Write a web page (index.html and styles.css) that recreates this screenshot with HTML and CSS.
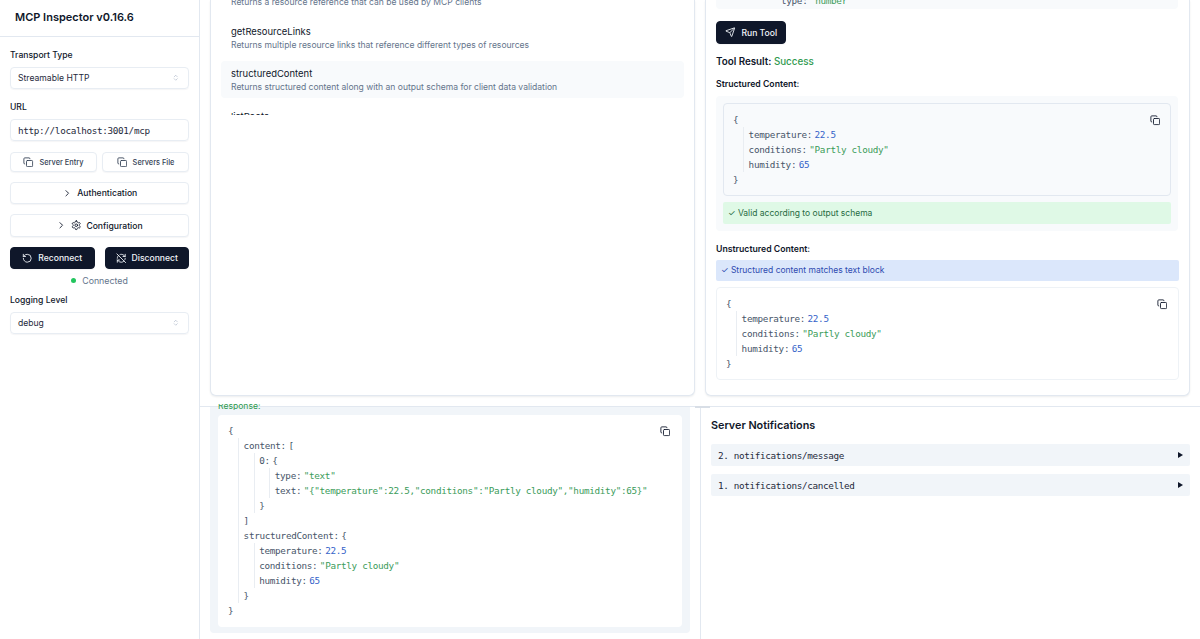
FILE: index.html
```html
<!DOCTYPE html>
<html lang="en">
<head>
<meta charset="utf-8">
<title>MCP Inspector</title>
<link rel="stylesheet" href="styles.css">
</head>
<body>
<svg class="defs" width="0" height="0" aria-hidden="true">
  <symbol id="i-copy" viewBox="0 0 24 24"><rect x="8" y="8" width="14" height="14" rx="2"/><path d="M4 16c-1.1 0-2-.9-2-2V4c0-1.1.9-2 2-2h10c1.1 0 2 .9 2 2"/></symbol>
  <symbol id="i-chev" viewBox="0 0 24 24"><path d="m9 18 6-6-6-6"/></symbol>
  <symbol id="i-updown" viewBox="0 0 24 24"><path d="m7 15 5 5 5-5"/><path d="m7 9 5-5 5 5"/></symbol>
  <symbol id="i-gear" viewBox="0 0 24 24"><path d="M12.22 2h-.44a2 2 0 0 0-2 2v.18a2 2 0 0 1-1 1.73l-.43.25a2 2 0 0 1-2 0l-.15-.08a2 2 0 0 0-2.73.73l-.22.38a2 2 0 0 0 .73 2.73l.15.1a2 2 0 0 1 1 1.72v.51a2 2 0 0 1-1 1.74l-.15.09a2 2 0 0 0-.73 2.73l.22.38a2 2 0 0 0 2.73.73l.15-.08a2 2 0 0 1 2 0l.43.25a2 2 0 0 1 1 1.73V20a2 2 0 0 0 2 2h.44a2 2 0 0 0 2-2v-.18a2 2 0 0 1 1-1.73l.43-.25a2 2 0 0 1 2 0l.15.08a2 2 0 0 0 2.73-.73l.22-.39a2 2 0 0 0-.73-2.73l-.15-.08a2 2 0 0 1-1-1.74v-.5a2 2 0 0 1 1-1.74l.15-.09a2 2 0 0 0 .73-2.73l-.22-.38a2 2 0 0 0-2.73-.73l-.15.08a2 2 0 0 1-2 0l-.43-.25a2 2 0 0 1-1-1.73V4a2 2 0 0 0-2-2z"/><circle cx="12" cy="12" r="3"/></symbol>
  <symbol id="i-rotate" viewBox="0 0 24 24"><path d="M3 12a9 9 0 1 0 9-9 9.75 9.75 0 0 0-6.74 2.74L3 8"/><path d="M3 3v5h5"/></symbol>
  <symbol id="i-off" viewBox="0 0 24 24"><path d="M21 8L18.74 5.74A9.75 9.75 0 0 0 12 3C11 3 10.03 3.16 9.13 3.47"/><path d="M8 16H3v5"/><path d="M3 12C3 9.51 4 7.26 5.64 5.64"/><path d="m3 16 2.26 2.26A9.75 9.75 0 0 0 12 21c2.49 0 4.74-1 6.36-2.64"/><path d="M21 12c0 1-.16 1.97-.47 2.87"/><path d="M21 3v5h-5"/><path d="M22 22 2 2"/></symbol>
  <symbol id="i-send" viewBox="0 0 24 24"><path d="M14.536 21.686a.5.5 0 0 0 .937-.024l6.5-19a.496.496 0 0 0-.635-.635l-19 6.5a.5.5 0 0 0-.024.937l7.93 3.18a2 2 0 0 1 1.112 1.11z"/><path d="m21.854 2.147-10.94 10.939"/></symbol>
</svg>
<div class="app">
  <aside class="sidebar">
    <header class="brand">MCP Inspector v0.16.6</header>
    <div class="controls">
      <label class="label">Transport Type</label>
      <div class="field select">Streamable HTTP<svg class="ico updown"><use href="#i-updown"/></svg></div>
      <label class="label url-label">URL</label>
      <div class="field mono">http://localhost:3001/mcp</div>
      <div class="pair small-pair">
        <button class="btn small"><svg class="ico"><use href="#i-copy"/></svg>Server Entry</button>
        <button class="btn small"><svg class="ico"><use href="#i-copy"/></svg>Servers File</button>
      </div>
      <button class="btn wide auth"><svg class="ico"><use href="#i-chev"/></svg>Authentication</button>
      <button class="btn wide cfg"><svg class="ico"><use href="#i-chev"/></svg><svg class="ico"><use href="#i-gear"/></svg>Configuration</button>
      <div class="pair dark-pair">
        <button class="btn dark"><svg class="ico"><use href="#i-rotate"/></svg>Reconnect</button>
        <button class="btn dark"><svg class="ico"><use href="#i-off"/></svg>Disconnect</button>
      </div>
      <div class="status"><span class="dot"></span>Connected</div>
      <label class="label log-label">Logging Level</label>
      <div class="field select">debug<svg class="ico updown"><use href="#i-updown"/></svg></div>
    </div>
  </aside>
  <main class="main">
    <section class="top">
      <div class="card">
        <div class="tools">
          <div class="tool"><div class="tool-name">getResourceReference</div><div class="tool-desc">Returns a resource reference that can be used by MCP clients</div></div>
          <div class="tool"><div class="tool-name">getResourceLinks</div><div class="tool-desc">Returns multiple resource links that reference different types of resources</div></div>
          <div class="tool selected"><div class="tool-name">structuredContent</div><div class="tool-desc">Returns structured content along with an output schema for client data validation</div></div>
          <div class="tool"><div class="tool-name">listRoots</div><div class="tool-desc">Lists the current MCP roots provided by the client</div></div>
        </div>
      </div>
      <div class="card result">
        <div class="schema-tail"><div class="json-line tail-line"><span class="key tail-key">type:</span><span class="str">"number"</span></div></div>
        <button class="btn dark run"><svg class="ico"><use href="#i-send"/></svg>Run Tool</button>
        <h4 class="result-title">Tool Result: <span class="ok">Success</span></h4>
        <h5 class="sub">Structured Content:</h5>
        <div class="struct-panel">
          <div class="json-box gray">
            <svg class="ico copy"><use href="#i-copy"/></svg>
            <div class="json-line">{</div>
            <div class="nest">
              <div class="json-line"><span class="key">temperature:</span><span class="num">22.5</span></div>
              <div class="json-line"><span class="key">conditions:</span><span class="str">"Partly cloudy"</span></div>
              <div class="json-line"><span class="key">humidity:</span><span class="num">65</span></div>
            </div>
            <div class="json-line">}</div>
          </div>
          <div class="valid">✓ Valid according to output schema</div>
        </div>
        <h5 class="sub unstructured">Unstructured Content:</h5>
        <div class="match">✓ Structured content matches text block</div>
        <div class="json-box plain">
          <svg class="ico copy"><use href="#i-copy"/></svg>
          <div class="json-line">{</div>
          <div class="nest">
            <div class="json-line"><span class="key">temperature:</span><span class="num">22.5</span></div>
            <div class="json-line"><span class="key">conditions:</span><span class="str">"Partly cloudy"</span></div>
            <div class="json-line"><span class="key">humidity:</span><span class="num">65</span></div>
          </div>
          <div class="json-line">}</div>
        </div>
      </div>
    </section>
    <section class="bottom">
      <div class="history">
        <div class="response-panel">
          <div class="response-clip"><span class="response-label">Response:</span></div>
          <div class="json-box response">
            <svg class="ico copy"><use href="#i-copy"/></svg>
            <div class="json-line">{</div>
            <div class="nest">
              <div class="json-line"><span class="key">content:</span>[</div>
              <div class="nest">
                <div class="json-line"><span class="key">0:</span>{</div>
                <div class="nest">
                  <div class="json-line"><span class="key">type:</span><span class="str">"text"</span></div>
                  <div class="json-line"><span class="key">text:</span><span class="str">"{"temperature":22.5,"conditions":"Partly cloudy","humidity":65}"</span></div>
                </div>
                <div class="json-line">}</div>
              </div>
              <div class="json-line">]</div>
              <div class="json-line"><span class="key">structuredContent:</span>{</div>
              <div class="nest">
                <div class="json-line"><span class="key">temperature:</span><span class="num">22.5</span></div>
                <div class="json-line"><span class="key">conditions:</span><span class="str">"Partly cloudy"</span></div>
                <div class="json-line"><span class="key">humidity:</span><span class="num">65</span></div>
              </div>
              <div class="json-line">}</div>
            </div>
            <div class="json-line">}</div>
          </div>
        </div>
      </div>
      <div class="notifications">
        <h3 class="notif-title">Server Notifications</h3>
        <div class="notif"><span>2. notifications/message</span><span class="arrow"></span></div>
        <div class="notif"><span>1. notifications/cancelled</span><span class="arrow"></span></div>
      </div>
    </section>
    <span class="handle"></span>
  </main>
</div>
</body>
</html>
```
FILE: styles.css
```css
* { box-sizing: border-box; }
html, body { margin: 0; height: 100%; }
body {
  font-family: Inter, "Liberation Sans", sans-serif;
  font-size: 8.6px;
  color: #0f172a;
  background: #fff;
  overflow: hidden;
}
.defs { position: absolute; }
.app { display: flex; width: 1200px; height: 639px; }

.ico {
  width: 10.5px; height: 10.5px;
  fill: none; stroke: currentColor; stroke-width: 2;
  stroke-linecap: round; stroke-linejoin: round;
  flex: none;
}

/* Sidebar */
.sidebar { width: 200px; flex: none; border-right: 1px solid #e2e8f0; }
.brand {
  height: 37px;
  padding: 8px 15px 0;
  font-size: 11px;
  line-height: 18px;
  font-weight: 600;
  border-bottom: 1px solid #e2e8f0;
}
.controls { display: flex; flex-direction: column; padding: 11px 10px 0; }
.label { font-size: 8.6px; line-height: 14px; font-weight: 500; color: #0f172a; margin-bottom: 5px; }
.url-label { margin-top: 11px; }
.log-label { margin-top: 6px; }
.field {
  display: flex; align-items: center; justify-content: space-between;
  height: 22px; padding: 0 7px;
  border: 1px solid #e8edf3; border-radius: 4px;
  font-size: 8.6px; color: #1e293b;
  box-shadow: 0 1px 1px rgba(15,23,42,.04);
}
.mono { font-family: "DejaVu Sans Mono", monospace; font-size: 9.3px; letter-spacing: -.33px; }
.updown { width: 7.5px; height: 7.5px; color: #94a3b8; stroke-width: 1.6; margin-right: 2px; }
.pair { display: flex; }
.small-pair { gap: 5px; margin-top: 11px; }
.dark-pair { gap: 10px; margin-top: 10px; }
.btn {
  display: flex; align-items: center; justify-content: center;
  font-family: inherit;
  border: 1px solid #e8edf3; border-radius: 4px;
  background: #fff; color: #0f172a;
  padding: 0;
  box-shadow: 0 1px 1px rgba(15,23,42,.04);
}
.small { flex: 1; height: 20px; gap: 5.5px; font-size: 7.4px; font-weight: 500; color: #334155; }
.wide { height: 22px; font-size: 8.6px; font-weight: 500; }
.auth { margin-top: 10px; gap: 5px; }
.cfg { margin-top: 10px; height: 23px; gap: 4.5px; }
.dark { background: #0f172a; border-color: #0f172a; color: #f1f5f9; height: 22px; font-size: 8.6px; font-weight: 500; gap: 5.5px; flex: 1; }
.status { display: flex; align-items: center; justify-content: center; gap: 6px; height: 14px; margin-top: 4px; font-size: 8.8px; color: #64748b; }
.dot { width: 5px; height: 5px; border-radius: 50%; background: #22c55e; }

/* Main */
.main { position: relative; flex: 1; display: flex; flex-direction: column; min-width: 0; }
.top {
  height: 407px; flex: none;
  display: grid; grid-template-columns: 485px 485px; gap: 10px;
  padding: 0 10px 10px;
  border-bottom: 1px solid #e2e8f0;
}
.card {
  border: 1px solid #e2e8f0; border-top: 0;
  border-radius: 0 0 6px 6px;
  background: #fff;
  box-shadow: 0 1px 2px rgba(15,23,42,.08);
  overflow: hidden;
  min-height: 0;
}

/* Tools list */
.tools { height: 139px; overflow: hidden; padding: 0 10px; display: flex; flex-direction: column; gap: 5.5px; margin-top: -24px; }
.tool { flex: none; height: 37px; padding: 6px 10px 0; border-radius: 4px; }
.selected { background: #f8fafc; }
.tool-name { font-size: 9.45px; line-height: 14px; color: #0f172a; }
.tool-desc { font-size: 8.55px; line-height: 13px; color: #64748b; }

/* Result pane */
.result { padding: 0 10px; display: flex; flex-direction: column; align-items: stretch; }
.schema-tail { height: 9px; margin-right: 1px; background: #f8fafc; border-radius: 0 0 4px 4px; overflow: hidden; padding-left: 65px; flex: none; }
.tail-line { margin-top: -7.5px; }
.tail-key { margin-right: 7px; }
.run { flex: none; align-self: flex-start; width: 70px; height: 23px; margin-top: 12px; gap: 6px; }
.result-title { margin: 10px 0 0; font-size: 9.8px; line-height: 15px; font-weight: 600; }
.ok { color: #2f9a50; font-weight: 500; }
.sub { margin: 8px 0 0; font-size: 8.7px; line-height: 14px; font-weight: 600; }
.struct-panel { margin: 5px 1px 0 0; height: 135px; padding: 7px; background: #f8fafc; border-radius: 4px; flex: none; }
.json-box { position: relative; color: #475569; border-radius: 4px; }
.gray { height: 93px; padding: 8px 9px; background: #f8fafc; border: 1px solid #e2e8f0; }
.plain { height: 93px; margin-top: 6px; padding: 8px 9px; background: #fff; border: 1px solid #eef2f6; flex: none; }
.copy { position: absolute; top: 11px; right: 11px; width: 10.5px; height: 10.5px; color: #0f172a; stroke-width: 2; }
.gray .copy { right: 10px; }
.response .copy { right: 12px; }
.json-line { line-height: 15px; height: 15px; white-space: pre; font-family: "DejaVu Sans Mono", monospace; font-size: 9.3px; letter-spacing: -.31px; color: #475569; }
.nest { margin-left: 10px; padding-left: 4.6px; border-left: 1px solid #e9edf2; }
.key { margin-right: 2.5px; }
.num { color: #3563c9; }
.str { color: #3b9c5a; }
.valid { margin-top: 6px; height: 22px; line-height: 22px; padding: 0 5px; background: #dff9e6; color: #276b43; font-size: 8.5px; border-radius: 2px; }
.unstructured { margin-top: 11px; }
.match { margin: 4px 0 0; height: 21px; line-height: 21px; padding: 0 5px; background: #dbe7fb; color: #2f4bb0; font-size: 8.5px; border-radius: 2px; flex: none; }

/* Bottom */
.bottom { flex: 1; display: flex; min-height: 0; }
.history { width: 500px; flex: none; padding: 0 10px; }
.response-panel { position: relative; height: 226px; padding: 8px 8px 6px; background: #f1f5f9; border-radius: 0 0 4px 4px; }
.response-clip { position: absolute; top: -3px; left: 8px; height: 6px; width: 60px; overflow: hidden; }
.response-label { display: block; margin-top: -3px; font-size: 8.6px; line-height: 11px; color: #2f9a50; }
.response { height: 212px; padding: 8px 10px; background: #fff; }
.notifications { flex: 1; border-left: 1px solid #e2e8f0; padding: 10px 10px 0; }
.notif-title { margin: 0 0 10px; font-size: 10.8px; line-height: 17px; font-weight: 600; }
.notif {
  display: flex; align-items: center; justify-content: space-between;
  height: 22px; margin-bottom: 8px; padding: 0 7px;
  background: #f1f5f9; border-radius: 2px;
  font-family: "DejaVu Sans Mono", monospace; font-size: 9.3px; letter-spacing: -.35px; color: #1e293b;
}
.arrow { width: 0; height: 0; border-left: 5px solid #0f172a; border-top: 3px solid transparent; border-bottom: 3px solid transparent; }
.handle { position: absolute; top: 406px; left: 495px; width: 15px; height: 1.5px; background: #d8dee6; }
```
